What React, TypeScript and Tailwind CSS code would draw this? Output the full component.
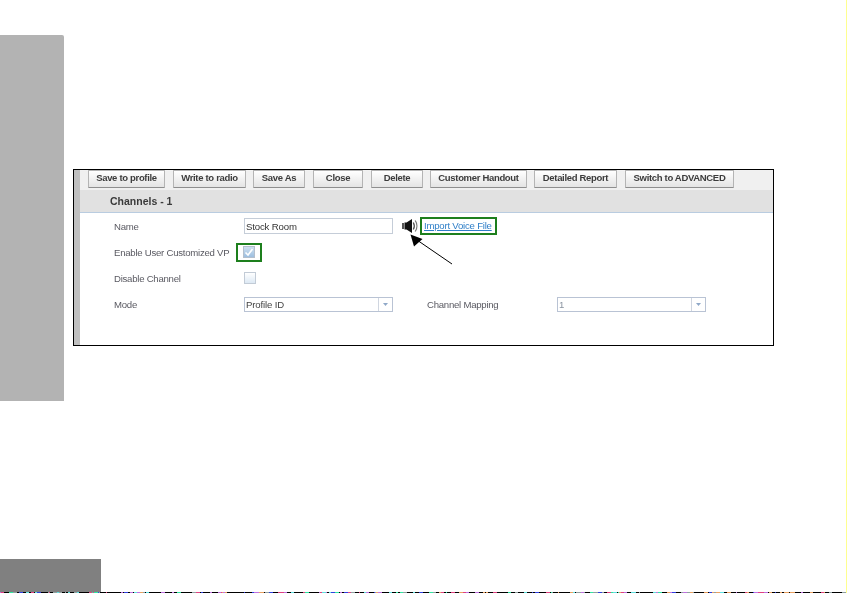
import React from "react";

const buttons = [
  { t: "Save to profile", w: "w-[77px]", ml: "ml-[8px]" },
  { t: "Write to radio", w: "w-[73px]", ml: "ml-[8px]" },
  { t: "Save As", w: "w-[52px]", ml: "ml-[7px]" },
  { t: "Close", w: "w-[50px]", ml: "ml-[8px]" },
  { t: "Delete", w: "w-[52px]", ml: "ml-[8px]" },
  { t: "Customer Handout", w: "w-[97px]", ml: "ml-[7px]" },
  { t: "Detailed Report", w: "w-[83px]", ml: "ml-[7px]" },
  { t: "Switch to ADVANCED", w: "w-[109px]", ml: "ml-[8px]" },
];

const noiseColors = ["#000", "#000", "#000", "#000", "#000", "#000", "#2ee6a0", "#c070e0", "#3040e0", "#e8a060", "#60e0e0", "#e04080", "#000", "#90a0a0"];
const noise = Array.from({ length: 340 }, (_, i) => {
  let n = Math.imul(i + 1, 2654435761) >>> 0;
  n = (n ^ (n >>> 13)) >>> 0;
  n = Math.imul(n, 1274126177) >>> 0;
  n = (n ^ (n >>> 16)) >>> 0;
  return { w: 1 + (n % 4), c: noiseColors[(n >>> 5) % noiseColors.length] };
});

function Speaker() {
  return (
    <svg width="16" height="16" viewBox="0 0 16 16" className="ml-[9px] shrink-0">
      <rect x="0" y="5" width="2" height="6" fill="#555" />
      <path d="M2.500 4.500h2L10 1v14L4.500 11.500h-2z" fill="#111" />
      <path d="M11.300 4.500c1.300 2.200 1.300 4.800 0 7" fill="none" stroke="#555" strokeWidth="1.300" />
      <path d="M13.200 2.500c2.200 3.200 2.200 7.800 0 11" fill="none" stroke="#777" strokeWidth="1.300" />
    </svg>
  );
}

function Check({ on }: { on?: boolean }) {
  return on ? (
    <span className="flex h-[12px] w-[12px] items-center justify-center border border-[#b4bfcd] bg-gradient-to-b from-[#cfe0f0] to-[#9dbfe0]">
      <svg width="10" height="10" viewBox="0 0 10 10">
        <path d="M1.500 5.500L4 8l4.500-6" fill="none" stroke="#fff" strokeWidth="1.600" />
      </svg>
    </span>
  ) : (
    <span className="block h-[12px] w-[12px] border border-[#c2cbd6] bg-gradient-to-b from-white to-[#dde9f4]" />
  );
}

function Select({ value, dim }: { value: string; dim?: boolean }) {
  return (
    <div className="flex h-[15px] w-[149px] items-stretch border border-[#b9c3d4] bg-white">
      <span className={`flex-1 pl-[1px] text-[9.600px] leading-[14px] tracking-[-0.15px] ${dim ? "text-[#8a94a0]" : "text-[#444]"}`}>{value}</span>
      <span className="flex w-[14px] items-center justify-center border-l border-[#d0d6e0]">
        <svg width="5" height="3" viewBox="0 0 5 3">
          <path d="M0 0h5L2.500 3z" fill="#8fa8c8" />
        </svg>
      </span>
    </div>
  );
}

function Row({ label, children }: { label: string; children: React.ReactNode }) {
  return (
    <div className="flex h-[26px] items-center">
      <span className="w-[130px] shrink-0 pt-[2px] text-[9.600px] tracking-[-0.25px] text-[#5a5a62]">{label}</span>
      {children}
    </div>
  );
}

export default function App() {
  return (
    <div className="flex h-[593px] w-[847px] flex-col overflow-hidden border-r border-[#ffff90] bg-white font-['Liberation_Sans',Arial,sans-serif]">
      <div className="flex h-[559px] items-start">
        <div className="mt-[35px] h-[366px] w-[64px] shrink-0 rounded-tr-[2px] bg-[#b3b3b3]" />
        <div className="relative ml-[9px] mt-[169px] flex h-[177px] w-[701px] border border-black bg-white">
          <div className="w-[6px] shrink-0 bg-[#c0c0c0]" />
          <div className="flex min-w-0 flex-1 flex-col blur-[0.25px]">
            <div className="flex h-[20px] items-start bg-[#f0f0f0]">
              {buttons.map((b) => (
                <span
                  key={b.t}
                  className={`flex h-[18px] shrink-0 items-center justify-center rounded-[1px] border border-[#b4b4b4] border-b-[#8e8e8e] bg-gradient-to-b from-white to-[#e4e4e4] pb-[2px] text-[9.500px] font-bold tracking-[-0.32px] text-[#3c3c3c] ${b.w} ${b.ml}`}
                >
                  {b.t}
                </span>
              ))}
            </div>
            <div className="flex h-[23px] items-center border-b border-[#b9cce0] bg-[#e1e1e1] pl-[30px] pt-[2px] text-[10.500px] font-bold text-[#3a3a3a]">
              Channels - 1
            </div>
            <div className="flex flex-col pl-[34px]">
              <Row label="Name">
                <span className="flex h-[16px] w-[149px] items-center border border-[#c5cdd8] pl-[1px] pt-[2px] text-[9.600px] tracking-[-0.15px] text-[#333]">Stock Room</span>
                <Speaker />
                <span className="ml-[2px] flex h-[18px] items-center border-2 border-[#1d7f1d] px-[2px] pr-[3px] text-[9.600px] tracking-[-0.22px] text-[#2f7fc8] underline">
                  Import Voice File
                </span>
              </Row>
              <Row label="Enable User Customized VP">
                <span className="ml-[-8px] flex h-[19px] w-[26px] items-center justify-center border-2 border-[#1d7f1d]">
                  <Check on />
                </span>
              </Row>
              <Row label="Disable Channel">
                <Check />
              </Row>
              <Row label="Mode">
                <Select value="Profile ID" />
                <span className="ml-[34px] w-[130px] pt-[2px] text-[9.600px] tracking-[-0.25px] text-[#5a5a62]">Channel Mapping</span>
                <Select value="1" dim />
              </Row>
            </div>
          </div>
          <svg width="60" height="45" viewBox="0 0 60 45" className="absolute left-[326px] top-[60px]">
            <path d="M52 34L17 10" stroke="#000" strokeWidth="1" />
            <path d="M10.500 4.500L22.500 9L14 16.500z" fill="#000" />
          </svg>
        </div>
      </div>
      <div className="h-[33px] w-[101px] bg-[#808080]" />
      <div className="flex h-[1px] overflow-hidden bg-black">
        {noise.map((s, i) => (
          <span key={i} className="h-[1px] shrink-0" style={{ width: s.w, backgroundColor: s.c }} />
        ))}
      </div>
    </div>
  );
}
